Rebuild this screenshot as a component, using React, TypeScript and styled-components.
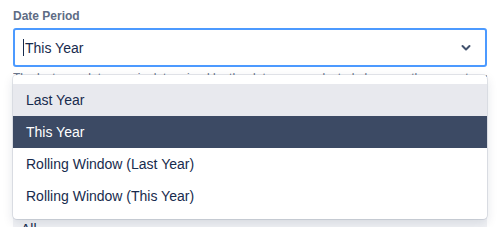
import React from 'react';
import styled, { createGlobalStyle } from 'styled-components';

const GlobalStyle = createGlobalStyle`
  html, body {
    margin: 0;
    padding: 0;
    background: #ffffff;
    font-family: "Liberation Sans", Arial, sans-serif;
    -webkit-font-smoothing: antialiased;
  }
`;

const Page = styled.div`
  width: 499px;
  height: 227px;
  overflow: hidden;
  padding: 8px 12px 0 13px;
  box-sizing: border-box;
`;

const Field = styled.div`
  position: relative;
`;

const Label = styled.label`
  display: block;
  font-size: 12px;
  line-height: 16px;
  font-weight: 700;
  color: #5e6c84;
  margin-bottom: 4px;
`;

const Control = styled.div`
  height: 39px;
  box-sizing: border-box;
  display: flex;
  align-items: center;
  border: 2px solid #4c9aff;
  border-radius: 3px;
  padding: 0 10px 0 8px;
  background: #ffffff;
`;

const Caret = styled.span`
  width: 1px;
  height: 17px;
  background: #172b4d;
  margin-right: 1px;
`;

const Value = styled.span`
  flex: 1;
  font-size: 14px;
  color: #172b4d;
`;

const Chevron = styled.svg`
  width: 10px;
  height: 8px;
  margin-right: 4px;
`;

const Helper = styled.div`
  margin-top: 3px;
  font-size: 12px;
  line-height: 16px;
  color: #6b778c;
  white-space: nowrap;
  overflow: hidden;
`;

const Menu = styled.div`
  position: absolute;
  left: 0;
  right: 0;
  top: 67px;
  background: #ffffff;
  border-radius: 4px;
  padding: 9px 0 7px;
  box-shadow: 0 0 0 1px rgba(9, 30, 66, 0.1), 0 4px 11px rgba(9, 30, 66, 0.12);
  z-index: 2;
`;

const Option = styled.div<{ $state?: 'focused' | 'selected' }>`
  height: 32px;
  display: flex;
  align-items: center;
  padding: 0 13px;
  font-size: 14px;
  color: ${p => (p.$state === 'selected' ? '#ffffff' : '#172b4d')};
  background: ${p =>
    p.$state === 'selected' ? '#3c4a64' : p.$state === 'focused' ? '#e8e9ee' : 'transparent'};
`;

const NextField = styled.div`
  margin-top: 129px;
  height: 40px;
  background: #f1f2f5;
  border-radius: 3px;
  padding: 6px 8px;
  box-sizing: border-box;
  font-size: 14px;
  color: #172b4d;
`;

const options = ['Last Year', 'This Year', 'Rolling Window (Last Year)', 'Rolling Window (This Year)'];

const App: React.FC = () => {
  return (
    <Page>
      <GlobalStyle />
      <Field>
        <Label>Date Period</Label>
        <Control>
          <Caret />
          <Value>This Year</Value>
          <Chevron viewBox="0 0 10 8">
            <path d="M1.5 2 L5 5.5 L8.5 2" fill="none" stroke="#42526e" strokeWidth="2" strokeLinecap="round" strokeLinejoin="round" />
          </Chevron>
        </Control>
        <Helper>The last complete year is determined by the date range selected above, or the current year.</Helper>
        <Menu>
          {options.map(o => (
            <Option key={o} $state={o === 'Last Year' ? 'focused' : o === 'This Year' ? 'selected' : undefined}>
              {o}
            </Option>
          ))}
        </Menu>
      </Field>
      <NextField>All</NextField>
    </Page>
  );
};

export default App;
